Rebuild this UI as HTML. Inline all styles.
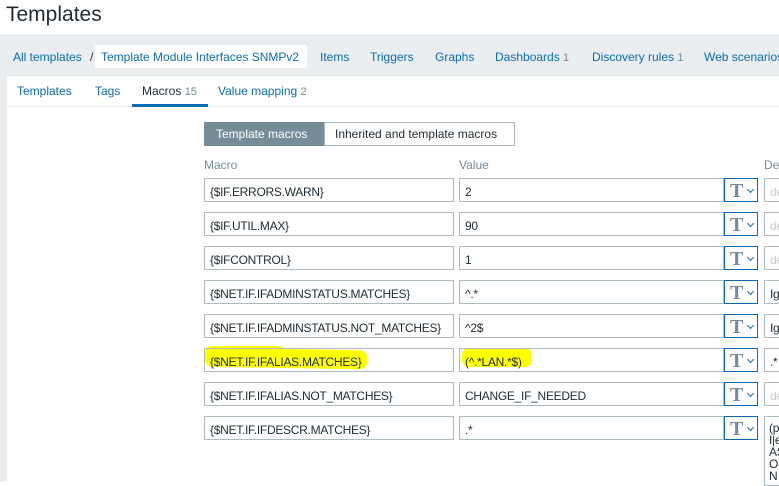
<!DOCTYPE html>
<html><head><style>
*{box-sizing:border-box;margin:0;padding:0}
body{width:779px;height:482px;overflow:hidden;background:#fff;font-family:"Liberation Sans",Arial,sans-serif;font-size:12px;color:#1f2c33;position:relative}
.a{position:absolute;white-space:nowrap}
h1{position:absolute;left:6px;top:3px;font-size:21px;font-weight:normal;color:#1f2c33}
.band{position:absolute;left:0;top:35px;width:779px;height:447px;background:#ebeef0;border-top:1px solid #dfe4e7}
.panel{position:absolute;left:7px;top:75px;width:772px;height:407px;background:#fff;border-top:1px solid #dfe4e7}
.lnk{color:#0a6db8;font-size:12px}
.cnt{color:#768d99;font-size:11px}
.inp{position:absolute;height:24px;border:1px solid #acbbc2;background:#fff;padding:6px 5px;font-size:12px;letter-spacing:-0.28px;white-space:nowrap;overflow:hidden;color:#1f2c33}
.tb{position:absolute;width:34px;height:24px;border:1px solid #0a6db8;background:#fff}
.tb span{position:absolute;left:5px;top:1px;font-family:"Liberation Serif",serif;font-size:20px;color:#768d99;font-weight:bold}
.tb i{position:absolute;left:23px;top:8px;width:5px;height:5px;border-right:1.3px solid #0a6db8;border-bottom:1.3px solid #0a6db8;transform:rotate(45deg)}
.ph{color:#c5ced3}
.hl{position:absolute;background:#ffff00;border-radius:7px}
</style></head><body>
<h1>Templates</h1>
<div class="band"></div>
<div class="a lnk" style="left:13px;top:50px">All templates</div>
<div class="a" style="left:90px;top:50px;color:#1f2c33">/</div>
<div class="a" style="left:95px;top:45px;width:212px;height:23px;background:#fff;border-radius:2px"></div>
<div class="a lnk" style="left:101px;top:50px">Template Module Interfaces SNMPv2</div>
<div class="a lnk" style="left:320px;top:50px">Items</div>
<div class="a lnk" style="left:370px;top:50px">Triggers</div>
<div class="a lnk" style="left:435px;top:50px">Graphs</div>
<div class="a lnk" style="left:495px;top:50px">Dashboards <span class="cnt">1</span></div>
<div class="a lnk" style="left:592px;top:50px">Discovery rules <span class="cnt">1</span></div>
<div class="a lnk" style="left:704px;top:50px">Web scenarios</div>
<div class="panel"></div>
<div class="a" style="left:7px;top:106px;width:772px;height:1px;background:#ebeef0"></div>
<div class="a lnk" style="left:17px;top:84px">Templates</div>
<div class="a lnk" style="left:95px;top:84px">Tags</div>
<div class="a" style="left:142px;top:84px">Macros <span class="cnt">15</span></div>
<div class="a" style="left:132px;top:104px;width:76px;height:3px;background:#0a6db8"></div>
<div class="a lnk" style="left:218px;top:84px">Value mapping <span class="cnt">2</span></div>
<div class="a" style="left:204px;top:122px;width:120px;height:24px;background:#768d99;color:#fff;padding:5px 0 0 12px">Template macros</div>
<div class="a" style="left:324px;top:122px;width:191px;height:24px;border:1px solid #acbbc2;padding:4px 0 0 10px">Inherited and template macros</div>
<div class="a" style="left:204px;top:158px;color:#768d99">Macro</div>
<div class="a" style="left:459px;top:158px;color:#768d99">Value</div>
<div class="a" style="left:764px;top:158px;color:#768d99">De</div>

<div class="hl" style="left:205px;top:349px;width:162px;height:19px;transform:rotate(1deg)"></div>
<div class="hl" style="left:205px;top:346px;width:80px;height:14px"></div>
<div class="hl" style="left:462px;top:348px;width:70px;height:19px"></div>

<div class="inp" style="left:204px;top:178px;width:250px">{$IF.ERRORS.WARN}</div>
<div class="inp" style="left:459px;top:178px;width:265px">2</div>
<div class="tb" style="left:724px;top:178px"><span>T</span><i></i></div>
<div class="inp ph" style="left:764px;top:178px;width:20px">de</div>

<div class="inp" style="left:204px;top:212px;width:250px">{$IF.UTIL.MAX}</div>
<div class="inp" style="left:459px;top:212px;width:265px">90</div>
<div class="tb" style="left:724px;top:212px"><span>T</span><i></i></div>
<div class="inp ph" style="left:764px;top:212px;width:20px">de</div>

<div class="inp" style="left:204px;top:246px;width:250px">{$IFCONTROL}</div>
<div class="inp" style="left:459px;top:246px;width:265px">1</div>
<div class="tb" style="left:724px;top:246px"><span>T</span><i></i></div>
<div class="inp ph" style="left:764px;top:246px;width:20px">de</div>

<div class="inp" style="left:204px;top:280px;width:250px">{$NET.IF.IFADMINSTATUS.MATCHES}</div>
<div class="inp" style="left:459px;top:280px;width:265px">^.*</div>
<div class="tb" style="left:724px;top:280px"><span>T</span><i></i></div>
<div class="inp" style="left:764px;top:280px;width:20px">Ig</div>

<div class="inp" style="left:204px;top:314px;width:250px">{$NET.IF.IFADMINSTATUS.NOT_MATCHES}</div>
<div class="inp" style="left:459px;top:314px;width:265px">^2$</div>
<div class="tb" style="left:724px;top:314px"><span>T</span><i></i></div>
<div class="inp" style="left:764px;top:314px;width:20px">Ig</div>

<div class="inp" style="left:204px;top:348px;width:250px;background:transparent">{$NET.IF.IFALIAS.MATCHES}</div>
<div class="inp" style="left:459px;top:348px;width:265px;background:transparent">(^.*LAN.*$)</div>
<div class="tb" style="left:724px;top:348px"><span>T</span><i></i></div>
<div class="inp" style="left:764px;top:348px;width:20px">.*</div>

<div class="inp" style="left:204px;top:382px;width:250px">{$NET.IF.IFALIAS.NOT_MATCHES}</div>
<div class="inp" style="left:459px;top:382px;width:265px">CHANGE_IF_NEEDED</div>
<div class="tb" style="left:724px;top:382px"><span>T</span><i></i></div>
<div class="inp ph" style="left:764px;top:382px;width:20px">de</div>

<div class="inp" style="left:204px;top:416px;width:250px">{$NET.IF.IFDESCR.MATCHES}</div>
<div class="inp" style="left:459px;top:416px;width:265px">.*</div>
<div class="tb" style="left:724px;top:416px"><span>T</span><i></i></div>
<div class="inp" style="left:764px;top:416px;width:20px;height:70px;line-height:12px;white-space:normal;padding:5px 4px">(p<br>I|e<br>AS<br>O<br>N</div>
</body></html>
